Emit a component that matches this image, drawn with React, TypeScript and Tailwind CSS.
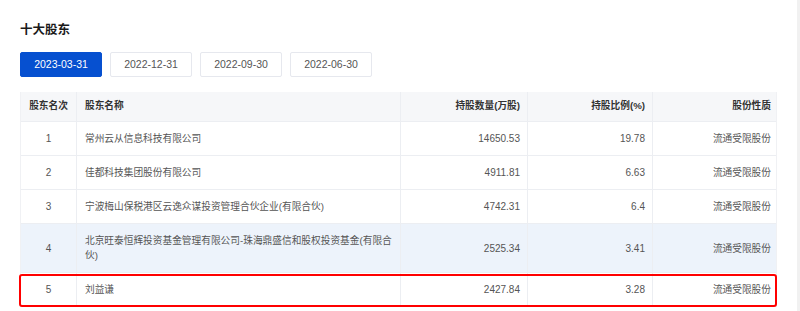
import React from "react";

const rows = [
  { rank: "1", name: "常州云从信息科技有限公司", qty: "14650.53", pct: "19.78", kind: "流通受限股份" },
  { rank: "2", name: "佳都科技集团股份有限公司", qty: "4911.81", pct: "6.63", kind: "流通受限股份" },
  { rank: "3", name: "宁波梅山保税港区云逸众谋投资管理合伙企业(有限合伙)", qty: "4742.31", pct: "6.4", kind: "流通受限股份" },
  { rank: "4", name: "北京旺泰恒辉投资基金管理有限公司-珠海鼎盛信和股权投资基金(有限合伙)", qty: "2525.34", pct: "3.41", kind: "流通受限股份" },
  { rank: "5", name: "刘益谦", qty: "2427.84", pct: "3.28", kind: "流通受限股份" },
];

const dates = ["2023-03-31", "2022-12-31", "2022-09-30", "2022-06-30"];

export default function App() {
  return (
    <div className="flex w-[800px] h-[311px] overflow-hidden bg-white font-['Liberation_Sans','Noto_Sans_CJK_SC',sans-serif]">
      <div className="flex-1 pl-[20px] pr-[20px] pt-[21px]">
        <h2 className="text-[12.5px] leading-[18px] font-bold text-[#1a1a1a]">十大股东</h2>
        <div className="mt-[13px] flex gap-[8px]">
          {dates.map((d, i) => (
            <button
              key={d}
              className={
                i === 0
                  ? "w-[82px] h-[25px] rounded-[2px] bg-[#0650d0] text-white text-[10.5px] border border-[#0650d0]"
                  : "w-[82px] h-[25px] rounded-[2px] bg-white text-[#555] text-[10.5px] border border-[#e6e8ee]"
              }
            >
              {d}
            </button>
          ))}
        </div>
        <div className="mt-[15px] w-[757px] border-x border-[#f0f1f4] text-[9.7px]">
          <div className="grid grid-cols-[56px_324px_127px_125px_125px] h-[30px] bg-[#f6f7f9] text-[#333] font-bold border-b border-[#eceef2]">
            <div className="flex items-center justify-center border-r border-[#eceef2]">股东名次</div>
            <div className="flex items-center pl-[8px] border-r border-[#eceef2]">股东名称</div>
            <div className="flex items-center justify-end pr-[7px] border-r border-[#eceef2]">持股数量(万股)</div>
            <div className="flex items-center justify-end pr-[7px] border-r border-[#eceef2]">持股比例(%)</div>
            <div className="flex items-center justify-end pr-[7px]">股份性质</div>
          </div>
          {rows.map((r, i) => (
            <div
              key={r.rank}
              className={
                "relative grid grid-cols-[56px_324px_127px_125px_125px] border-b border-[#eceef2] text-[#555] leading-[15px] " +
                (i === 3 ? "bg-[#edf3fb]" : "bg-white")
              }
            >
              <div className="flex items-center justify-center py-[9px] border-r border-[#eceef2] text-[10px]">{r.rank}</div>
              <div className="flex items-center pl-[8px] pr-[8px] py-[9px] border-r border-[#eceef2]">{r.name}</div>
              <div className="flex items-center justify-end pr-[7px] py-[9px] border-r border-[#eceef2] text-[10px]">{r.qty}</div>
              <div className="flex items-center justify-end pr-[7px] py-[9px] border-r border-[#eceef2] text-[10px]">{r.pct}</div>
              <div className="flex items-center justify-end pr-[7px] py-[9px]">{r.kind}</div>
              {i === 4 && (
                <div className="absolute left-[-2px] right-[-1px] top-[1px] bottom-[-1px] border-2 border-[#f00] rounded-[3px] pointer-events-none" />
              )}
            </div>
          ))}
        </div>
      </div>
      <div className="w-[3px] bg-[#f1f1f1]" />
    </div>
  );
}
